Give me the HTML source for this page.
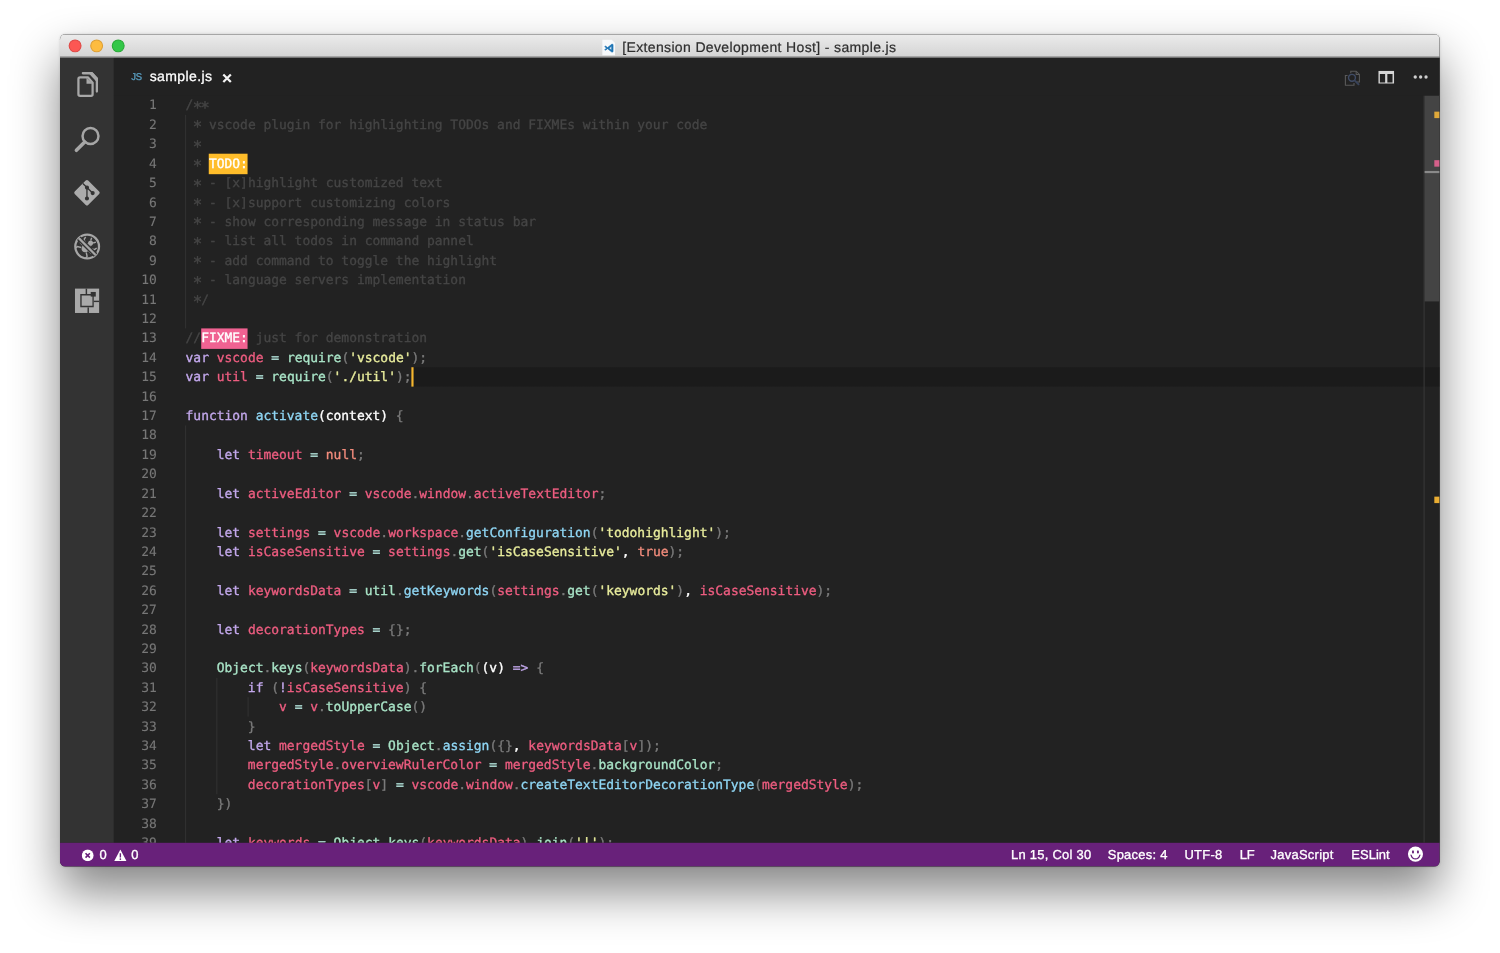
<!DOCTYPE html>
<html><head><meta charset="utf-8"><title>[Extension Development Host] - sample.js</title>
<style>
html,body{margin:0;padding:0;background:#fff;}
body{width:1500px;height:953px;overflow:hidden;position:relative;font-family:"Liberation Sans",sans-serif;}
#win{text-rendering:geometricPrecision;position:absolute;left:60.2px;top:34px;width:1280px;height:772px;transform:scale(1.0779,1.0784);transform-origin:0 0;border-radius:5px;overflow:hidden;background:#222;
 box-shadow:0 23px 44px rgba(0,0,0,.48),0 0 3px rgba(0,0,0,.14);will-change:transform;}
#title{position:absolute;left:0;top:0;width:1280px;height:22px;background:linear-gradient(#ececec,#d4d4d4);box-shadow:inset 0 0.9px 0 #a6a6a6;border-bottom:0.5px solid #c2c2c2;box-sizing:border-box;}
#title .t{position:absolute;left:521.6px;top:1.9px;height:22px;line-height:22px;font-size:13px;color:#2f2f2f;white-space:nowrap;letter-spacing:0.325px;-webkit-text-stroke:0.2px #2f2f2f;}
.tl{position:absolute;top:4.9px;width:12.4px;height:12.4px;border-radius:50%;box-sizing:border-box;}
#act{position:absolute;left:0;top:22px;width:50px;height:728px;background:#333;}
#act svg{position:absolute;left:9px;width:32px;height:32px;}
#tabs{position:absolute;left:50px;top:22px;width:1230px;height:35px;background:#222;}
#tabs .js{position:absolute;left:16.2px;top:1.2px;line-height:35px;font-size:9.2px;color:#5a9fc2;transform:scaleX(.95);transform-origin:0 50%;-webkit-text-stroke:0.3px #5a9fc2;}
#tabs .name{position:absolute;left:33.2px;top:0.45px;line-height:35px;font-size:13px;color:#fff;letter-spacing:0.38px;-webkit-text-stroke:0.25px #fff;}
#tabs svg{position:absolute;}
#ed{position:absolute;left:50px;top:57px;width:1230px;height:693px;background:#222;overflow:hidden;font-family:"DejaVu Sans Mono","Liberation Mono",monospace;font-size:12px;-webkit-text-stroke-width:0.3px;}
.ln{position:relative;height:18px;line-height:18px;white-space:pre;}
.no,.code{margin-top:0.4px;}
.no{-webkit-text-stroke-width:0.1px;}
.a{display:inline-block;transform:translateY(2.3px) scale(1.22);}
.ln.cur{background:linear-gradient(90deg,#222 277px,#1b1b1b 277px);}
.no{position:absolute;left:0;top:0;width:39.9px;text-align:right;color:#777;}
.code{position:absolute;left:66.5px;top:0;color:#ddd;}
.guide{position:absolute;margin-left:0.3px;width:1.2px;background:#313131;}
.todo,.fixme{display:inline-block;height:18.8px;vertical-align:top;color:#fff;}
.todo{background:#ffbd2a;}
.fixme{background:#f06292;}
.cursor{display:inline-block;width:2px;height:18px;background:#f5b62e;vertical-align:top;margin-left:0px;}
.k{color:#c3a8ec}
.v{color:#ee5d80}
.o{color:#b4e4dc}
.g{color:#a8e3c6}
.f{color:#8fd6f4}
.s{color:#e8ec9c}
.p{color:#7a7a7a}
.n{color:#f28c7c}
.w{color:#ffffff}
.c{color:#454545}
#sb{position:absolute;left:1215.3px;top:0;width:14.7px;height:693px;border-left:1px solid #383838;box-sizing:border-box;background:transparent;}
#status{position:absolute;left:0;top:750px;width:1280px;height:22px;background:#68217a;color:#fff;font-size:12px;line-height:22px;white-space:nowrap;letter-spacing:0.26px;-webkit-text-stroke:0.3px #fff;}
#status span{position:absolute;top:0;}
#status svg{position:absolute;}
</style></head><body>
<div id="win">
 <div id="title">
  <div class="tl" style="left:8.1px;background:#fc5753;border:0.5px solid #df4744;"></div>
  <div class="tl" style="left:28.1px;background:#fdbc40;border:0.5px solid #de9f34;"></div>
  <div class="tl" style="left:48.1px;background:#33c748;border:0.5px solid #27aa35;"></div>
  <svg style="position:absolute;left:503.4px;top:4.6px" width="12" height="15" viewBox="0 0 12 15"><path d="M0 0h8.6L12 3.4V15H0z" fill="#f7f9fb"/><path d="M9.1 4.3 5 7.6 3.2 6.2 2.3 6.7 4 8.1 2.3 9.5 3.2 10 5 8.6 9.1 11.9 10.1 11.4V4.8zM8.7 6.4v3.4L6.4 8.1z" fill="#1d74b4" stroke="#1d74b4" stroke-width="0.5"/></svg>
  <div class="t">[Extension Development Host] - sample.js</div>
 </div>
 <div id="act">
  <svg style="top:9px" viewBox="0 0 32 32"><g fill="none" stroke="#a8a8a8" stroke-width="2.1" stroke-linejoin="round"><path d="M9.6 9.2H16.8L21.25 14.2V24.9Q21.25 26.35 19.8 26.35H9.6Q8.1 26.35 8.1 24.9V10.7Q8.1 9.2 9.6 9.2z"/><path d="M12.2 5.4H20.6L25.2 10.4V22.4" stroke-linecap="round"/></g><path d="M15.6 9.6V15.2H21z" fill="#a8a8a8"/><path d="M19.6 4.4H21.2L26.2 9.8V12.6H24.2L18.4 6.3z" fill="#a8a8a8"/></svg>
  <svg style="top:59px" viewBox="0 0 32 32"><circle cx="19.3" cy="13.6" r="7.4" fill="none" stroke="#a6a6a6" stroke-width="2.3"/><path d="M13.9 19.2 6.2 26.9" stroke="#a6a6a6" stroke-width="3.3" stroke-linecap="round"/></svg>
  <svg style="top:109px" viewBox="0 0 32 32"><rect x="7.2" y="7.4" width="17.6" height="17.6" rx="1.6" transform="rotate(45 16 16.2)" fill="#ababab"/><g stroke="#333" stroke-width="1.25" fill="#333"><path d="M12.2 7.6 21.2 16.4M16 11.4V21.4" fill="none"/><circle cx="16" cy="11.4" r="1.3"/><circle cx="21.3" cy="16.5" r="1.3"/><circle cx="16" cy="21.5" r="1.3"/></g></svg>
  <svg style="top:159px" viewBox="0 0 32 32"><circle cx="16.2" cy="16.1" r="11" fill="none" stroke="#a6a6a6" stroke-width="2.1"/><g transform="rotate(45 16.2 16.1)"><ellipse cx="16.2" cy="17.6" rx="3.7" ry="4.6" fill="#a6a6a6"/><circle cx="16.2" cy="11.6" r="2.3" fill="#a6a6a6"/><g stroke="#a6a6a6" stroke-width="1.3" fill="none"><path d="M12.8 15.2 9.4 13.4 9 10.8M19.6 15.2 23 13.4 23.4 10.8M12.5 18H8.6M19.9 18h3.9M12.9 20.6 9.8 22.6 9.6 25M19.5 20.6 22.6 22.6 22.8 25M14.6 9.8 13.4 7.4M17.8 9.8 19 7.4"/></g></g><path d="M8.4 8.3 24 23.9" stroke="#333" stroke-width="4.6"/><path d="M8.4 8.3 24 23.9" stroke="#a6a6a6" stroke-width="2.1"/></svg>
  <svg style="top:209px" viewBox="0 0 32 32"><rect x="4.9" y="5.1" width="22.4" height="22.6" fill="#a9a9a9"/><g fill="#333"><path d="M9.8 10h12.5v12.5H9.8zM11.1 11.6v9.3h10v-9.3z" fill-rule="evenodd"/><rect x="19.5" y="8.2" width="4.7" height="4.3"/><rect x="14.8" y="5.1" width="1.35" height="5"/><rect x="22.3" y="16.3" width="5" height="1.3"/><rect x="16.5" y="22.5" width="1.35" height="5.2"/></g></svg>
 </div>
 <div id="tabs">
  <span class="js">JS</span><span class="name">sample.js</span>
  <svg style="left:100.2px;top:13.7px" width="10" height="10" viewBox="0 0 10 10"><path d="M1.5 1.5 8.5 8.5M8.5 1.5 1.5 8.5" stroke="#f2f2f2" stroke-width="2.1"/></svg>
  <svg style="left:1141px;top:10.5px" width="16" height="16" viewBox="0 0 16 16"><g fill="none" stroke="#5a5a5a" stroke-width="1"><path d="M6.5 3.5V1.5h5l3 3v7h-3"/><path d="M11.5 1.5v3h3"/><path d="M3.5 5.5h-2v9h8v-2"/></g><circle cx="7.6" cy="7.6" r="3.2" fill="none" stroke="#404c66" stroke-width="1.3"/><path d="M10 10 14.2 14.2" stroke="#38435a" stroke-width="1.8"/></svg>
  <svg style="left:1173.1px;top:11.5px" width="14.7" height="12.4" viewBox="0 0 15 13" preserveAspectRatio="none"><path d="M0 0h15v13H0zM1.5 3.2v8.3h5V3.2zM8.6 3.2v8.3h4.9V3.2z" fill="#d6d6d6" fill-rule="evenodd"/></svg>
  <svg style="left:1204.5px;top:16px" width="16" height="4" viewBox="0 0 16 4"><circle cx="2.3" cy="1.9" r="1.55" fill="#cfcfcf"/><circle cx="7.3" cy="1.9" r="1.55" fill="#cfcfcf"/><circle cx="12.3" cy="1.9" r="1.55" fill="#cfcfcf"/></svg>
 </div>
 <div id="ed">
<div class="ln"><span class="no">1</span><span class="code"><span class="c">/<span class="a">*</span><span class="a">*</span></span></span></div>
<div class="ln"><span class="no">2</span><span class="code"><span class="c"> <span class="a">*</span> vscode plugin for highlighting TODOs and FIXMEs within your code</span></span></div>
<div class="ln"><span class="no">3</span><span class="code"><span class="c"> <span class="a">*</span></span></span></div>
<div class="ln"><span class="no">4</span><span class="code"><span class="c"> <span class="a">*</span> </span><span class="todo">TODO:</span></span></div>
<div class="ln"><span class="no">5</span><span class="code"><span class="c"> <span class="a">*</span> - [x]highlight customized text</span></span></div>
<div class="ln"><span class="no">6</span><span class="code"><span class="c"> <span class="a">*</span> - [x]support customizing colors</span></span></div>
<div class="ln"><span class="no">7</span><span class="code"><span class="c"> <span class="a">*</span> - show corresponding message in status bar</span></span></div>
<div class="ln"><span class="no">8</span><span class="code"><span class="c"> <span class="a">*</span> - list all todos in command pannel</span></span></div>
<div class="ln"><span class="no">9</span><span class="code"><span class="c"> <span class="a">*</span> - add command to toggle the highlight</span></span></div>
<div class="ln"><span class="no">10</span><span class="code"><span class="c"> <span class="a">*</span> - language servers implementation</span></span></div>
<div class="ln"><span class="no">11</span><span class="code"><span class="c"> <span class="a">*</span>/</span></span></div>
<div class="ln"><span class="no">12</span><span class="code"></span></div>
<div class="ln"><span class="no">13</span><span class="code"><span class="c">//</span><span class="fixme">FIXME:</span><span class="c"> just for demonstration</span></span></div>
<div class="ln"><span class="no">14</span><span class="code"><span class="k">var</span> <span class="v">vscode</span> <span class="o">=</span> <span class="g">require</span><span class="p">(</span><span class="s">'vscode'</span><span class="p">);</span></span></div>
<div class="ln cur"><span class="no">15</span><span class="code"><span class="k">var</span> <span class="v">util</span> <span class="o">=</span> <span class="g">require</span><span class="p">(</span><span class="s">'./util'</span><span class="p">);</span><span class="cursor"></span></span></div>
<div class="ln"><span class="no">16</span><span class="code"></span></div>
<div class="ln"><span class="no">17</span><span class="code"><span class="k">function</span> <span class="f">activate</span><span class="w">(context)</span> <span class="p">{</span></span></div>
<div class="ln"><span class="no">18</span><span class="code"></span></div>
<div class="ln"><span class="no">19</span><span class="code">    <span class="k">let</span> <span class="v">timeout</span> <span class="o">=</span> <span class="n">null</span><span class="p">;</span></span></div>
<div class="ln"><span class="no">20</span><span class="code"></span></div>
<div class="ln"><span class="no">21</span><span class="code">    <span class="k">let</span> <span class="v">activeEditor</span> <span class="o">=</span> <span class="v">vscode</span><span class="p">.</span><span class="v">window</span><span class="p">.</span><span class="v">activeTextEditor</span><span class="p">;</span></span></div>
<div class="ln"><span class="no">22</span><span class="code"></span></div>
<div class="ln"><span class="no">23</span><span class="code">    <span class="k">let</span> <span class="v">settings</span> <span class="o">=</span> <span class="v">vscode</span><span class="p">.</span><span class="v">workspace</span><span class="p">.</span><span class="f">getConfiguration</span><span class="p">(</span><span class="s">'todohighlight'</span><span class="p">);</span></span></div>
<div class="ln"><span class="no">24</span><span class="code">    <span class="k">let</span> <span class="v">isCaseSensitive</span> <span class="o">=</span> <span class="v">settings</span><span class="p">.</span><span class="g">get</span><span class="p">(</span><span class="s">'isCaseSensitive'</span><span class="w">,</span> <span class="n">true</span><span class="p">);</span></span></div>
<div class="ln"><span class="no">25</span><span class="code"></span></div>
<div class="ln"><span class="no">26</span><span class="code">    <span class="k">let</span> <span class="v">keywordsData</span> <span class="o">=</span> <span class="g">util</span><span class="p">.</span><span class="f">getKeywords</span><span class="p">(</span><span class="v">settings</span><span class="p">.</span><span class="g">get</span><span class="p">(</span><span class="s">'keywords'</span><span class="p">)</span><span class="w">,</span> <span class="v">isCaseSensitive</span><span class="p">);</span></span></div>
<div class="ln"><span class="no">27</span><span class="code"></span></div>
<div class="ln"><span class="no">28</span><span class="code">    <span class="k">let</span> <span class="v">decorationTypes</span> <span class="o">=</span> <span class="p">{};</span></span></div>
<div class="ln"><span class="no">29</span><span class="code"></span></div>
<div class="ln"><span class="no">30</span><span class="code">    <span class="g">Object</span><span class="p">.</span><span class="g">keys</span><span class="p">(</span><span class="v">keywordsData</span><span class="p">).</span><span class="g">forEach</span><span class="p">(</span><span class="w">(v)</span> <span class="k">=&gt;</span> <span class="p">{</span></span></div>
<div class="ln"><span class="no">31</span><span class="code">        <span class="k">if</span> <span class="p">(</span><span class="k">!</span><span class="v">isCaseSensitive</span><span class="p">)</span> <span class="p">{</span></span></div>
<div class="ln"><span class="no">32</span><span class="code">            <span class="v">v</span> <span class="o">=</span> <span class="v">v</span><span class="p">.</span><span class="g">toUpperCase</span><span class="p">()</span></span></div>
<div class="ln"><span class="no">33</span><span class="code">        <span class="p">}</span></span></div>
<div class="ln"><span class="no">34</span><span class="code">        <span class="k">let</span> <span class="v">mergedStyle</span> <span class="o">=</span> <span class="g">Object</span><span class="p">.</span><span class="f">assign</span><span class="p">({}</span><span class="w">,</span> <span class="v">keywordsData</span><span class="p">[</span><span class="v">v</span><span class="p">]);</span></span></div>
<div class="ln"><span class="no">35</span><span class="code">        <span class="v">mergedStyle</span><span class="p">.</span><span class="v">overviewRulerColor</span> <span class="o">=</span> <span class="v">mergedStyle</span><span class="p">.</span><span class="g">backgroundColor</span><span class="p">;</span></span></div>
<div class="ln"><span class="no">36</span><span class="code">        <span class="v">decorationTypes</span><span class="p">[</span><span class="v">v</span><span class="p">]</span> <span class="o">=</span> <span class="v">vscode</span><span class="p">.</span><span class="v">window</span><span class="p">.</span><span class="f">createTextEditorDecorationType</span><span class="p">(</span><span class="v">mergedStyle</span><span class="p">);</span></span></div>
<div class="ln"><span class="no">37</span><span class="code">    <span class="p">})</span></span></div>
<div class="ln"><span class="no">38</span><span class="code"></span></div>
<div class="ln"><span class="no">39</span><span class="code">    <span class="k">let</span> <span class="v">keywords</span> <span class="o">=</span> <span class="g">Object</span><span class="p">.</span><span class="g">keys</span><span class="p">(</span><span class="v">keywordsData</span><span class="p">).</span><span class="g">join</span><span class="p">(</span><span class="s">'|'</span><span class="p">);</span></span></div>
<div class="ln"><span class="no">40</span><span class="code"></span></div>
  <div class="guide" style="left:66px;top:18px;height:198px;"></div>
  <div class="guide" style="left:66px;top:306px;height:400px;"></div>
  <div class="guide" style="left:95px;top:540px;height:108px;"></div>
  <div class="guide" style="left:124px;top:558px;height:18px;"></div>
  <div id="sb">
   <div style="position:absolute;left:0;top:0;width:14px;height:191px;background:#444;"></div>
   <div style="position:absolute;left:8.6px;top:14.6px;width:5.2px;height:6px;background:#e0a93a;"></div>
   <div style="position:absolute;left:8.6px;top:59.6px;width:5.2px;height:6px;background:#d5608a;"></div>
   <div style="position:absolute;left:0;top:70px;width:14px;height:2px;background:#8a8a8a;"></div>
   <div style="position:absolute;left:8.6px;top:372px;width:5.2px;height:6.4px;background:#e9ad33;"></div>
  </div>
 </div>
 <div id="status">
  <svg style="left:20.2px;top:5.9px" width="11.4" height="11.4" viewBox="0 0 13 13"><circle cx="6.5" cy="6.5" r="6.2" fill="#fff"/><path d="M4.2 4.2 8.8 8.8M8.8 4.2 4.2 8.8" stroke="#68217a" stroke-width="1.7"/></svg>
  <span style="left:36.6px;">0</span>
  <svg style="left:49.6px;top:6px" width="12" height="11.2" viewBox="0 0 14 13"><path d="M7 0.3 13.6 12.6H0.4z" fill="#fff"/><path d="M7 4.4V9" stroke="#68217a" stroke-width="1.5"/><circle cx="7" cy="10.7" r="0.9" fill="#68217a"/></svg>
  <span style="left:66.2px;">0</span>
  <span style="left:882.2px;">Ln 15, Col 30</span>
  <span style="left:972px;">Spaces: 4</span>
  <span style="left:1043.2px;">UTF-8</span>
  <span style="left:1094.6px;letter-spacing:-0.4px">LF</span>
  <span style="left:1123px;">JavaScript</span>
  <span style="left:1198px;letter-spacing:0.05px">ESLint</span>
  <svg style="left:1249.6px;top:3.4px" width="15" height="15" viewBox="0 0 15 15"><circle cx="7.5" cy="7.5" r="7" fill="#fff"/><ellipse cx="5.2" cy="5.5" rx="0.95" ry="1.5" fill="#68217a"/><ellipse cx="9.8" cy="5.5" rx="0.95" ry="1.5" fill="#68217a"/><path d="M3.4 8.4C4.3 11.3 6 12 7.5 12S10.7 11.3 11.6 8.4" fill="none" stroke="#68217a" stroke-width="1.2" stroke-linecap="round"/></svg>
 </div>
</body></html>
